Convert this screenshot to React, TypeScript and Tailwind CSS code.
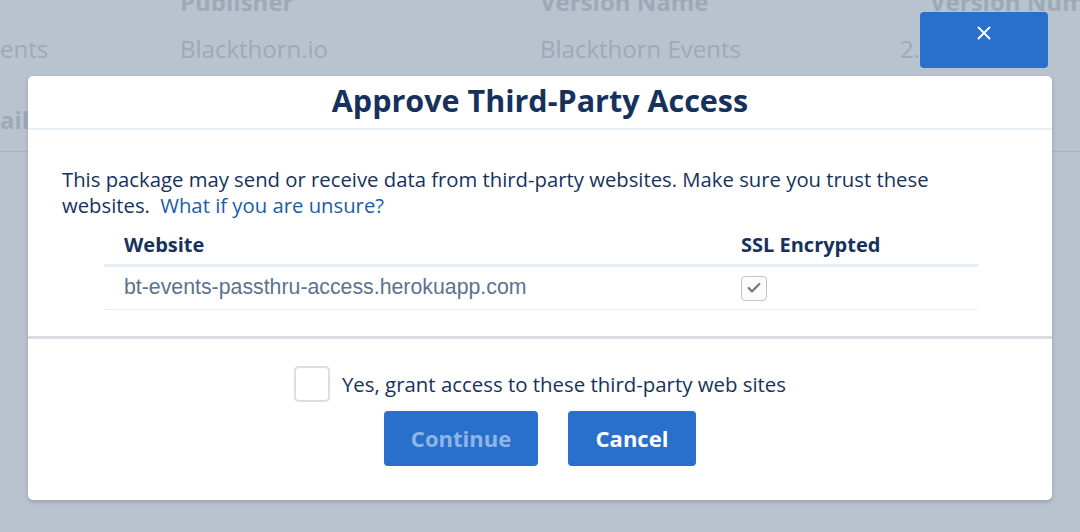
import { X, Check } from 'lucide-react';

const font = { fontFamily: '"Open Sans", "Noto Sans", sans-serif' };

export default function App() {
  return (
    <div className="relative h-[532px] w-[1080px] overflow-hidden bg-[#b9c3cf]" style={font}>
      {/* page behind the overlay */}
      <div className="text-[24px] text-[#9ea9b7]">
        <div className="flex h-[10px] items-end whitespace-nowrap font-bold leading-none">
          <div className="w-[180px] shrink-0" />
          <div className="-mb-[4px] w-[360px] shrink-0">Publisher</div>
          <div className="-mb-[4px] w-[390px] shrink-0">Version Name</div>
          <div className="-mb-[4px] shrink-0">Version Number</div>
        </div>
        <div className="flex h-[78px] items-center whitespace-nowrap leading-none">
          <div className="w-[180px] shrink-0">ents</div>
          <div className="w-[360px] shrink-0">Blackthorn.io</div>
          <div className="w-[360px] shrink-0">Blackthorn Events</div>
          <div className="shrink-0">2.</div>
        </div>
        <div className="flex h-[64px] items-center border-b border-[#aab4c1] font-bold leading-none">
          <div>ail</div>
        </div>
      </div>

      {/* close button */}
      <button className="absolute left-[920px] top-[12px] flex h-[56px] w-[128px] justify-center rounded-[4px] bg-[#2870cc] pt-[10px] text-white">
        <X size={22} strokeWidth={2} />
      </button>

      {/* modal */}
      <div className="absolute left-[28px] top-[76px] w-[1024px] rounded-[5px] bg-white shadow-[0_2px_4px_rgba(0,0,0,0.18)]">
        <div className="flex h-[54px] items-center justify-center border-b-2 border-[#e6eef6] pb-[3px]">
          <h2 className="text-[30.5px] font-bold leading-none text-[#16325c]">Approve Third-Party Access</h2>
        </div>

        <div className="border-b-[3px] border-[#d8dde3] pb-[26px] pl-[34px] pr-[34px] pt-[36px] text-[#16325c]">
          <p className="text-[20.3px] leading-[26px]">
            This package may send or receive data from third-party websites. Make sure you trust these
            <br />
            websites.{' '}
            <a className="ml-[5px] text-[#1a5da6]">What if you are unsure?</a>
          </p>

          <div className="ml-[42px] mr-[40px] mt-[7px]">
            <div className="flex h-[42px] items-center border-b-[3px] border-[#e6eef6] pl-[20px] text-[20px] font-bold">
              <div className="w-[617px]">Website</div>
              <div>SSL Encrypted</div>
            </div>
            <div className="flex h-[43px] items-center border-b border-[#e6eef6] pl-[20px]">
              <div
                className="w-[617px] text-[21.3px] text-[#5d7290]"
                style={{ fontFamily: '"Liberation Sans", Arial, sans-serif' }}
              >
                bt-events-passthru-access.herokuapp.com
              </div>
              <div className="flex h-[25px] w-[26px] items-center justify-center rounded-[4px] border border-[#c4c4c4] bg-[#fbfbfb]">
                <Check size={16} strokeWidth={3.4} className="text-[#7a7a7a]" />
              </div>
            </div>
          </div>
        </div>

        <div className="flex flex-col items-center pb-[34px] pt-[27px]">
          <label className="flex items-center gap-[12px] text-[20.4px] text-[#16325c]">
            <span className="h-[36px] w-[36px] rounded-[5px] border-2 border-[#dddddd] bg-white" />
            Yes, grant access to these third-party web sites
          </label>
          <div className="mt-[9px] flex gap-[30px]">
            <button className="h-[55px] w-[154px] rounded-[4px] bg-[#2870cc] text-[22px] font-bold text-[#8fb5e6]">
              Continue
            </button>
            <button className="h-[55px] w-[128px] rounded-[4px] bg-[#2870cc] text-[22px] font-bold text-white">
              Cancel
            </button>
          </div>
        </div>
      </div>
    </div>
  );
}
